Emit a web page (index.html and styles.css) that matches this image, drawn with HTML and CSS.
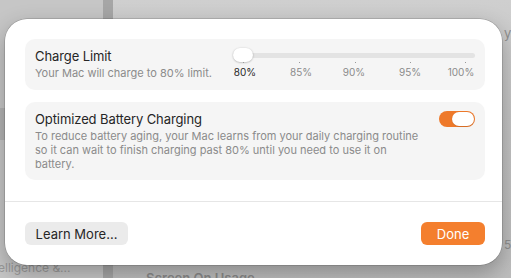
FILE: index.html
```html
<!DOCTYPE html>
<html lang="en">
<head>
    <meta charset="UTF-8">
    <meta name="viewport" content="width=device-width, initial-scale=1.0">
    <title>Battery Options</title>
    <link rel="stylesheet" href="styles.css">
</head>
<body>
    <!-- dimmed settings window behind the sheet -->
    <div class="backdrop">
        <div class="sidebar">
            <div class="side-band"></div>
            <p class="side-item">elligence &amp;...</p>
        </div>
        <div class="split"></div>
        <div class="main">
            <p class="peek-top">ys</p>
            <p class="peek-num">5</p>
            <p class="main-heading">Screen On Usage</p>
        </div>
    </div>

    <div class="sheet">
        <div class="cards">
            <div class="card charge">
                <div class="text">
                    <p class="title">Charge Limit</p>
                    <p class="sub">Your Mac will charge to 80% limit.</p>
                </div>
                <div class="slider">
                    <div class="track"></div>
                    <div class="knob"></div>
                    <span class="tick" style="left:10px"></span>
                    <span class="tick" style="left:66px"></span>
                    <span class="tick" style="left:122px"></span>
                    <span class="tick" style="left:177px"></span>
                    <span class="tick" style="left:232px"></span>
                    <span class="mark current" style="left:12px">80%</span>
                    <span class="mark" style="left:68px">85%</span>
                    <span class="mark" style="left:121px">90%</span>
                    <span class="mark" style="left:177px">95%</span>
                    <span class="mark" style="left:228px">100%</span>
                </div>
            </div>

            <div class="card optimized">
                <div class="text">
                    <p class="title">Optimized Battery Charging</p>
                    <p class="sub">To reduce battery aging, your Mac learns from your daily charging routine so it can wait to finish charging past 80% until you need to use it on battery.</p>
                </div>
                <div class="toggle"><span class="toggle-knob"></span></div>
            </div>
        </div>

        <div class="footer">
            <button class="btn">Learn More...</button>
            <button class="btn primary">Done</button>
        </div>
    </div>
</body>
</html>
```

FILE: styles.css
```css
* {
    margin: 0;
    padding: 0;
    box-sizing: border-box;
}
body {
    width: 511px;
    height: 278px;
    overflow: hidden;
    position: relative;
    background: #c9c9c9;
    font-family: Inter, "Liberation Sans", sans-serif;
    -webkit-font-smoothing: antialiased;
}

/* backdrop window */
.backdrop {
    position: absolute;
    inset: 0;
    display: flex;
}
.sidebar {
    width: 103px;
    background: #c6c6c6;
    position: relative;
}
.side-band {
    position: absolute;
    left: 0;
    top: 108px;
    width: 8px;
    height: 32px;
    background: #b3b3b3;
}
.side-item {
    position: absolute;
    left: -2px;
    top: 260px;
    font-size: 12px;
    color: #9a9a9a;
}
.split {
    width: 10px;
    background: #a6a6a6;
}
.main {
    flex: 1;
    background: linear-gradient(#cfcfcf, #c4c4c4 40%, #bdbdbd);
    position: relative;
}
.peek-top {
    position: absolute;
    left: 391px;
    top: 25px;
    font-size: 13px;
    color: #8f8f8f;
}
.peek-num {
    position: absolute;
    left: 391px;
    top: 237px;
    font-size: 12px;
    color: #8f8f8f;
}
.main-heading {
    position: absolute;
    left: 33px;
    top: 270px;
    font-size: 13px;
    font-weight: 600;
    color: #8a8a8a;
}

/* sheet */
.sheet {
    position: absolute;
    left: 5px;
    top: 19px;
    width: 497px;
    height: 246px;
    background: #fff;
    border-radius: 22px;
    box-shadow: 0 0 0 0.5px rgba(0,0,0,0.25), 0 8px 22px rgba(0,0,0,0.28);
    display: flex;
    flex-direction: column;
}
.cards {
    padding: 20px 17px 21px 20px;
    display: flex;
    flex-direction: column;
    gap: 12px;
    border-bottom: 1px solid #e6e6e6;
}
.card {
    background: #f5f5f5;
    border-radius: 10px;
    display: flex;
    justify-content: space-between;
    padding: 9px 10px 9px 10px;
}
.title {
    font-size: 13px;
    line-height: 16px;
    color: #262626;
    letter-spacing: -0.1px;
}
.sub {
    font-size: 11px;
    line-height: 14px;
    color: #8b8b8b;
    margin-top: 2px;
}
.charge {
    height: 51px;
}

/* slider */
.slider {
    position: relative;
    width: 242px;
    margin-top: -1px;
}
.track {
    position: absolute;
    left: 2px;
    right: 0;
    top: 6px;
    height: 5px;
    border-radius: 3px;
    background: #e3e3e3;
}
.knob {
    position: absolute;
    left: 0;
    top: 1px;
    width: 20px;
    height: 14px;
    border-radius: 7px;
    background: #fff;
    box-shadow: 0 0.5px 2px rgba(0,0,0,0.3);
}
.tick {
    position: absolute;
    top: 15px;
    width: 1px;
    height: 1px;
    background: #9a9a9a;
}
.mark {
    position: absolute;
    top: 19px;
    transform: translateX(-50%);
    font-size: 10px;
    line-height: 12px;
    color: #8b8b8b;
}
.mark.current {
    color: #262626;
}

/* toggle */
.optimized .text {
    width: 388px;
}
.toggle {
    width: 36px;
    height: 16px;
    border-radius: 8px;
    background: #ee792a;
    padding: 1px;
    display: flex;
    justify-content: flex-end;
    flex-shrink: 0;
}
.toggle-knob {
    width: 22px;
    height: 14px;
    border-radius: 7px;
    background: #fff;
    box-shadow: 0 0.5px 1px rgba(0,0,0,0.2);
}

/* footer */
.footer {
    padding: 20px 17px 20px 20px;
    display: flex;
    justify-content: space-between;
}
.btn {
    height: 23px;
    border: none;
    border-radius: 6px;
    background: #ebebeb;
    color: #262626;
    font-family: inherit;
    font-size: 13px;
    white-space: nowrap;
    width: 103px;
}
.btn.primary {
    width: 64px;
    background: #f47f2e;
    color: #fff;
}
```
